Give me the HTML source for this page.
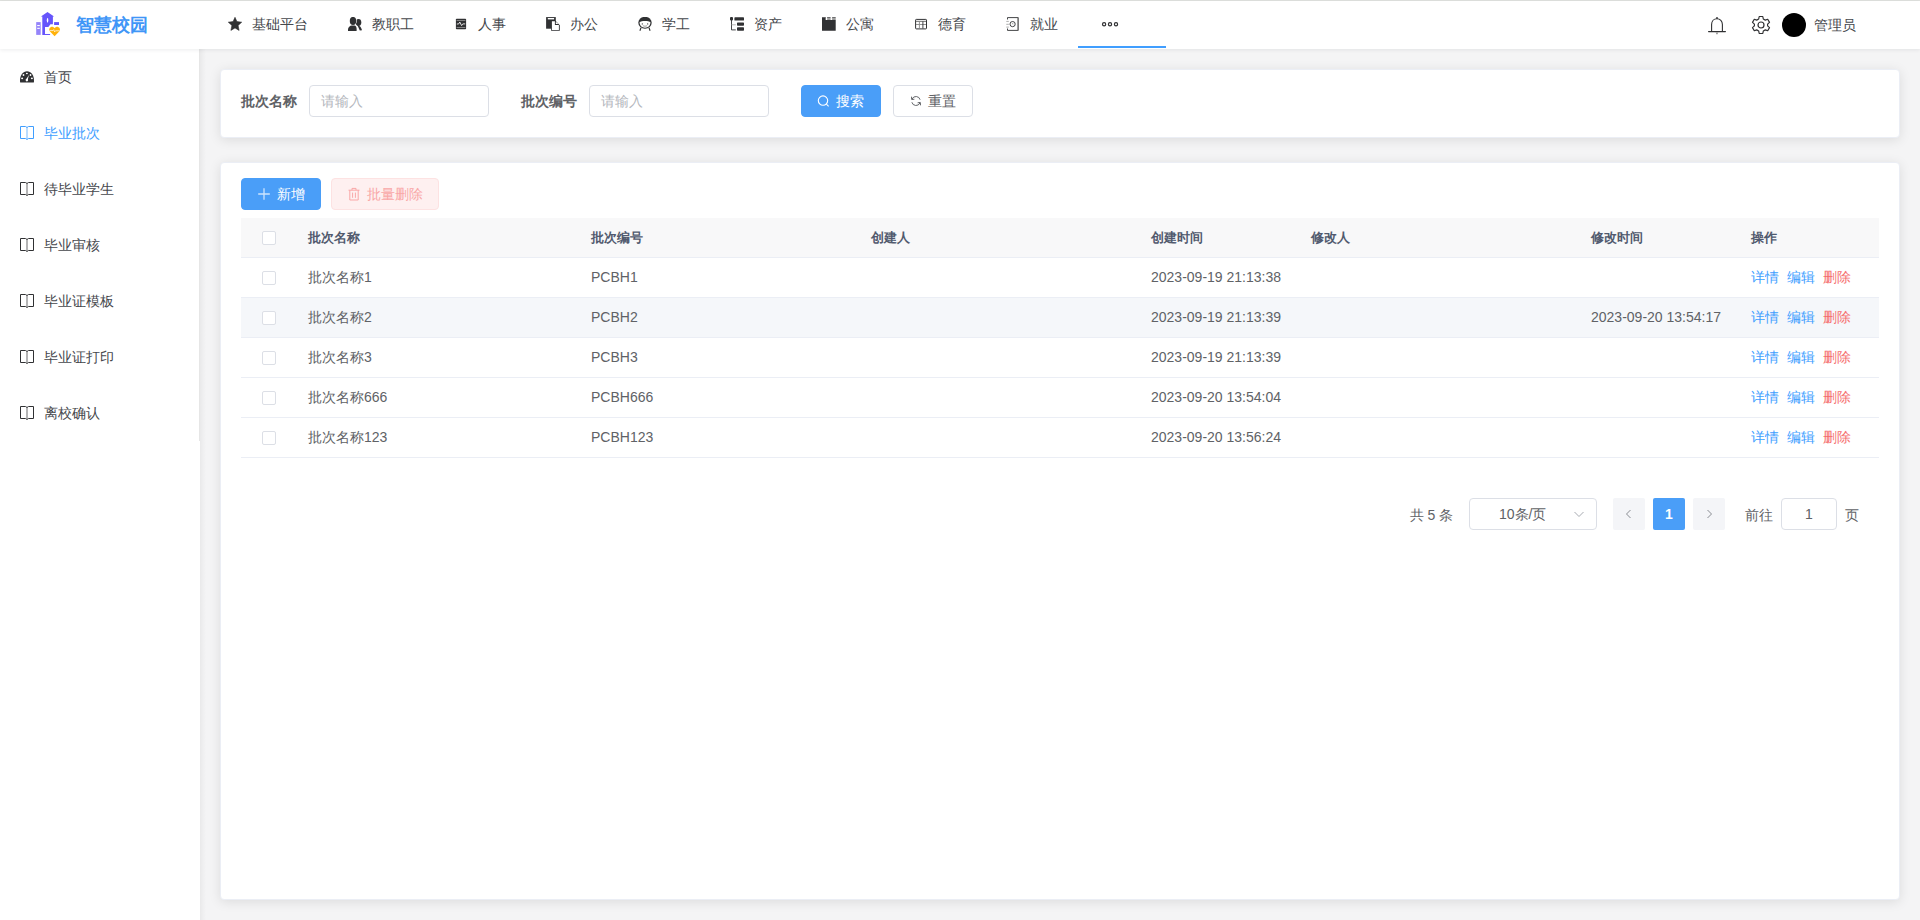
<!DOCTYPE html>
<html><head><meta charset="utf-8">
<style>
*{box-sizing:border-box;margin:0;padding:0}
html,body{width:1920px;height:920px;overflow:hidden}
body{font-family:"Liberation Sans",sans-serif;font-size:14px;color:#606266;background:#f4f4f5;position:relative}
.abs{position:absolute}
#topline{left:0;top:0;width:1920px;height:1px;background:#dfe1de}
#header{left:0;top:1px;width:1920px;height:48px;background:#fff;box-shadow:0 1px 4px rgba(0,21,41,.08);z-index:5}
#sidebar{left:0;top:49px;width:200px;height:871px;background:#fff;z-index:3}
#menuborder{left:199px;top:49px;width:1px;height:392px;background:#e6e6e6;z-index:4}
.card{background:#fff;border:1px solid #ebeef5;border-radius:4px;box-shadow:0 2px 12px 0 rgba(0,0,0,.1)}
.nav{top:0;height:49px;display:flex;align-items:center;color:#303133;font-size:14px}
.nav svg{display:block}
.txt{white-space:nowrap;line-height:1}

.inp{border:1px solid #dcdfe6;border-radius:4px;background:#fff;z-index:6;padding-left:11px;display:flex;align-items:center;font-size:14px;color:#b4b7bd;white-space:nowrap}
.btn{border-radius:4px;z-index:6;display:flex;align-items:center;justify-content:center;font-size:14px;white-space:nowrap;padding-top:2px}
.btn.primary{background:#4a9ef8;border:1px solid #4a9ef8;color:#fff;font-weight:500}
.btn svg{margin-top:-2px}
.btn.plain{background:#fff;border:1px solid #dcdfe6;color:#606266}

.th{font-size:13px;font-weight:bold;color:#515a6e;z-index:7}
.td{font-size:14px;color:#606266;z-index:7}
.cb{width:14px;height:14px;border:1px solid #dcdfe6;border-radius:2px;background:#fff;z-index:7}
.pg{width:32px;height:32px;background:#f4f5f8;border-radius:2px;z-index:6;display:flex;align-items:center;justify-content:center;font-size:14px;color:#606266}
</style></head><body>
<div id="topline" class="abs"></div>
<div id="header" class="abs"></div>
<div id="sidebar" class="abs"></div>
<div id="menuborder" class="abs"></div>
<div class="abs" style="left:200px;top:49px;width:6px;height:871px;background:linear-gradient(to right,rgba(0,0,0,.045),rgba(0,0,0,0));z-index:2"></div>
<div class="abs card" style="left:220px;top:69px;width:1680px;height:69px"></div>
<div class="abs card" style="left:220px;top:162px;width:1680px;height:738px"></div>

<!-- logo -->
<svg class="abs" style="left:34px;top:10px;z-index:6" width="30" height="28" viewBox="0 0 30 28">
  <rect x="2.2" y="12.1" width="4.5" height="12.8" fill="#9584fa"/>
  <rect x="3.2" y="15" width="2.6" height="1.1" fill="#fff"/>
  <rect x="3.2" y="17.8" width="2.6" height="1.1" fill="#fff"/>
  <path d="M13.5 2 L20.1 6.5 L18.9 6.5 L18.9 14.3 L16.5 14.3 L14.3 17 L11 17 L11 23.9 L16.1 23.9 L16.1 25 L8.3 25 L8.3 6.5 L6.9 6.5 Z" fill="#6655fb"/>
  <ellipse cx="13.55" cy="10.3" rx="0.75" ry="2.4" fill="#fff"/>
  <rect x="20.1" y="12.1" width="4.9" height="2.9" fill="#6655fb"/>
  <path d="M20.6 26.2 L16 21.5 C14.6 20 15 17.4 17.1 16.9 C18.6 16.6 19.8 17.3 20.6 18.2 C21.4 17.3 22.6 16.6 24.1 16.9 C26.2 17.4 26.6 20 25.2 21.5 Z" fill="#ffb20a"/>
  <path d="M15.6 20.6 L19 20.6 L19.7 19.6 L20.7 21.9 L21.5 20.8 L25.6 20.8" stroke="#fff" stroke-width="0.7" fill="none"/>
</svg>
<div class="abs txt" style="left:76px;top:16px;font-size:18px;font-weight:bold;color:#4096f7;z-index:6;letter-spacing:0px">智慧校园</div>
<div class="abs" style="left:228px;top:17px;z-index:6"><svg width="14" height="14" viewBox="0 0 14 14"><path d="M7 0.3 L8.9 4.6 L13.7 5.2 L10.1 8.4 L11.1 13.4 L7 10.9 L2.9 13.4 L3.9 8.4 L0.3 5.2 L5.1 4.6 Z" fill="#303133" stroke="#303133" stroke-width="0.6" stroke-linejoin="round"/></svg></div>
<div class="abs txt" style="left:252px;top:17px;font-size:14px;color:#45474c;z-index:6">基础平台</div>
<div class="abs" style="left:348px;top:17px;z-index:6"><svg width="14" height="14" viewBox="0 0 14 14"><ellipse cx="10.5" cy="5.5" rx="2.8" ry="3.4" fill="#303133"/><path d="M9.3 8 C11.8 8.6 13.5 10.6 14 13.3 L11.8 13.6 Z" fill="#303133"/><g fill="#fff" stroke="#fff" stroke-width="1.1"><ellipse cx="5" cy="4" rx="3.2" ry="4.1"/><path d="M-0.2 14 L0.1 11.8 C0.5 9.7 2.2 8.4 3.6 8.4 L6.4 8.4 C7.8 8.4 8.6 9.7 8.6 11.6 L8.6 14 Z"/></g><g fill="#303133"><ellipse cx="5" cy="4" rx="3.2" ry="4.1"/><path d="M-0.2 14 L0.1 11.8 C0.5 9.7 2.2 8.4 3.6 8.4 L6.4 8.4 C7.8 8.4 8.6 9.7 8.6 11.6 L8.6 14 Z"/></g></svg></div>
<div class="abs txt" style="left:372px;top:17px;font-size:14px;color:#45474c;z-index:6">教职工</div>
<div class="abs" style="left:454px;top:17px;z-index:6"><svg width="14" height="14" viewBox="0 0 14 14"><rect x="1.9" y="1.8" width="10.2" height="10.4" rx="0.8" fill="#303133"/><rect x="2.6" y="3.2" width="8.8" height="0.6" fill="#bbb"/><rect x="2.6" y="10.1" width="8.8" height="0.6" fill="#bbb"/><path d="M2.8 7 L4.6 7 L5.8 5 L7.6 8.6 L8.8 6.9 L11.2 6.9" stroke="#eee" stroke-width="0.9" fill="none"/></svg></div>
<div class="abs txt" style="left:478px;top:17px;font-size:14px;color:#45474c;z-index:6">人事</div>
<div class="abs" style="left:546px;top:17px;z-index:6"><svg width="14" height="14" viewBox="0 0 14 14"><rect x="0.1" y="0.1" width="9.7" height="11.6" fill="#303133"/><rect x="1.8" y="1" width="6.3" height="1.4" fill="#fff"/><path d="M5.1 3.4 L9.3 3.4 L13.8 8.3 L13.8 13.8 L5.1 13.8 Z" fill="#303133"/><path d="M5.9 4.3 L8.9 4.3 L8.9 7.9 L12.9 7.9 L12.9 12.9 L5.9 12.9 Z" fill="#fff"/><path d="M9.8 4.7 L12.5 7 L9.8 7 Z" fill="#fff"/></svg></div>
<div class="abs txt" style="left:570px;top:17px;font-size:14px;color:#45474c;z-index:6">办公</div>
<div class="abs" style="left:638px;top:17px;z-index:6"><svg width="14" height="14" viewBox="0 0 14 14"><ellipse cx="7" cy="5.8" rx="6.7" ry="6" fill="#303133"/><path d="M1.6 5.1 C3.2 3.5 10.8 3.5 12.4 5.1 C12.6 8.6 10.2 10.8 7 10.8 C3.8 10.8 1.4 8.6 1.6 5.1 Z" fill="#fff"/><circle cx="4.3" cy="6.9" r="0.6" fill="#303133"/><circle cx="9.7" cy="6.9" r="0.6" fill="#303133"/><path d="M4.9 8.6 C6 9.4 8 9.4 9.1 8.6" stroke="#888" stroke-width="0.8" fill="none"/><path d="M3 10.8 L1.9 13.8 M11 10.8 L12.1 13.8" stroke="#303133" stroke-width="1.1"/></svg></div>
<div class="abs txt" style="left:662px;top:17px;font-size:14px;color:#45474c;z-index:6">学工</div>
<div class="abs" style="left:730px;top:17px;z-index:6"><svg width="14" height="14" viewBox="0 0 14 14"><rect x="0" y="0" width="3" height="3.4" rx="1" fill="#303133"/><path d="M1.5 3 L1.5 12.9 L5.8 12.9" stroke="#303133" stroke-width="0.9" fill="none"/><path d="M1.5 7.8 L5.8 7.8" stroke="#aaa" stroke-width="0.9"/><rect x="4.4" y="0.3" width="9.6" height="3.3" rx="0.7" fill="#303133"/><rect x="7" y="5.4" width="7" height="3.3" rx="0.7" fill="#303133"/><rect x="7" y="10.3" width="7" height="3.4" rx="0.7" fill="#303133"/></svg></div>
<div class="abs txt" style="left:754px;top:17px;font-size:14px;color:#45474c;z-index:6">资产</div>
<div class="abs" style="left:822px;top:17px;z-index:6"><svg width="14" height="14" viewBox="0 0 14 14"><path d="M0 0.3 L3.8 0.3 L3.8 3 L13.7 3 L13.7 13.7 L0 13.7 Z" fill="#303133"/><rect x="5.1" y="0.3" width="3.5" height="0.8" fill="#303133"/><rect x="10.1" y="0.3" width="3.6" height="0.8" fill="#303133"/><rect x="5.1" y="1.1" width="8.6" height="1.9" fill="#999"/><rect x="3.8" y="1.1" width="1.3" height="1.9" fill="#fff"/><rect x="8.6" y="1.1" width="1.5" height="1.9" fill="#fff"/></svg></div>
<div class="abs txt" style="left:846px;top:17px;font-size:14px;color:#45474c;z-index:6">公寓</div>
<div class="abs" style="left:914px;top:17px;z-index:6"><svg width="14" height="14" viewBox="0 0 14 14"><rect x="1.6" y="2.4" width="10.9" height="9.5" rx="0.7" fill="none" stroke="#303133" stroke-width="1"/><path d="M2 4.4 L12 4.4" stroke="#888" stroke-width="1.2"/><path d="M2 7.5 L12 7.5" stroke="#888" stroke-width="0.9"/><path d="M5.4 4.4 L5.4 11.5" stroke="#888" stroke-width="0.9"/><path d="M8.9 4.4 L8.9 11.5" stroke="#303133" stroke-width="0.9"/></svg></div>
<div class="abs txt" style="left:938px;top:17px;font-size:14px;color:#45474c;z-index:6">德育</div>
<div class="abs" style="left:1006px;top:17px;z-index:6"><svg width="14" height="14" viewBox="0 0 14 14"><path d="M1.5 2.5 L1.5 0.6 L12.2 0.6 L12.2 13.4 L1.5 13.4 L1.5 11.5" stroke="#303133" stroke-width="0.9" fill="none"/><path d="M12 0.6 L12 13.4" stroke="#777" stroke-width="1"/><path d="M0.3 4.4 L2.8 4.4 M0.3 7.3 L2.8 7.3 M0.3 10.1 L2.8 10.1" stroke="#999" stroke-width="0.8"/><circle cx="6.6" cy="7.1" r="2.6" fill="none" stroke="#303133" stroke-width="0.9"/><path d="M6.6 5.9 L6.9 7.4" stroke="#888" stroke-width="0.8"/></svg></div>
<div class="abs txt" style="left:1030px;top:17px;font-size:14px;color:#45474c;z-index:6">就业</div>
<svg class="abs" style="left:1099px;top:18px;z-index:6" width="24" height="12" viewBox="0 0 24 12"><circle cx="5.1" cy="6.3" r="1.6" fill="none" stroke="#303133" stroke-width="1.2"/><circle cx="11" cy="6.3" r="1.6" fill="none" stroke="#303133" stroke-width="1.2"/><circle cx="17" cy="6.3" r="1.6" fill="none" stroke="#303133" stroke-width="1.2"/></svg>
<div class="abs" style="left:1078px;top:46px;width:88px;height:2px;background:#409eff;z-index:6"></div>
<svg class="abs" style="left:1706px;top:15px;z-index:6" width="22" height="22" viewBox="0 0 22 22"><path d="M5.6 16.5 L5.6 9.6 C5.6 6.2 7.9 3.7 11 3.7 C14.1 3.7 16.4 6.2 16.4 9.6 L16.4 16.5" stroke="#303133" stroke-width="1.1" fill="none"/><path d="M2.6 16.6 L19.4 16.6" stroke="#303133" stroke-width="1.2" stroke-linecap="round"/><circle cx="11" cy="3" r="0.9" fill="#303133"/><path d="M9.6 17.4 L12.4 17.4 L11 19.8 Z" fill="#888"/></svg>
<svg class="abs" style="left:1750px;top:14px;z-index:6" width="22" height="22" viewBox="0 0 22 22"><path d="M9.2 2.5 L12.8 2.5 L13.3 5 L15.3 6.1 L17.7 5.3 L19.5 8.4 L17.6 10.1 L17.6 11.9 L19.5 13.6 L17.7 16.7 L15.3 15.9 L13.3 17 L12.8 19.5 L9.2 19.5 L8.7 17 L6.7 15.9 L4.3 16.7 L2.5 13.6 L4.4 11.9 L4.4 10.1 L2.5 8.4 L4.3 5.3 L6.7 6.1 L8.7 5 Z" stroke="#303133" stroke-width="1.2" stroke-linejoin="round" fill="none"/><circle cx="11" cy="11" r="3" stroke="#303133" stroke-width="1.2" fill="none"/></svg>
<div class="abs" style="left:1782px;top:13px;width:24px;height:24px;border-radius:50%;background:#000;z-index:6"></div>
<div class="abs txt" style="left:1814px;top:18px;font-size:14px;color:#45474c;z-index:6">管理员</div>
<div class="abs" style="left:20px;top:70px;z-index:6"><svg width="14" height="14" viewBox="0 0 14 14"><path d="M0.2 12.6 C0 11.8 0 11.2 0 10.4 C0 5.1 3.1 1.2 7 1.2 C10.9 1.2 14 5.1 14 10.4 C14 11.2 14 11.8 13.8 12.6 Z" fill="#303133"/><ellipse cx="6.9" cy="3.5" rx="1" ry="0.8" fill="#fff"/><ellipse cx="3.5" cy="4.9" rx="0.9" ry="1" fill="#fff"/><ellipse cx="10.5" cy="4.9" rx="0.9" ry="1" fill="#fff"/><ellipse cx="2.1" cy="8.4" rx="1" ry="0.8" fill="#fff"/><ellipse cx="11.9" cy="8.4" rx="1" ry="0.8" fill="#fff"/><path d="M6.1 9.4 L8.9 4.9 L7.7 10 Z" fill="#fff"/><circle cx="6.85" cy="9.9" r="1.25" fill="#fff"/><path d="M6.85 11 L6.85 12.6" stroke="#999" stroke-width="0.6"/></svg></div>
<div class="abs txt" style="left:44px;top:70px;font-size:14px;color:#45474c;z-index:6">首页</div>
<div class="abs" style="left:20px;top:126px;z-index:6"><svg width="14" height="14" viewBox="0 0 14 14"><path d="M0.5 0.5 H5.6 L7 1.5 L8.4 0.5 H13.5 V12.5 H8.4 L7 13.5 L5.6 12.5 H0.5 Z" fill="none" stroke="#409eff" stroke-width="1"/><rect x="6.2" y="1.4" width="1.6" height="11.3" fill="#409eff" opacity="0.45"/></svg></div>
<div class="abs txt" style="left:44px;top:126px;font-size:14px;color:#409eff;z-index:6">毕业批次</div>
<div class="abs" style="left:20px;top:182px;z-index:6"><svg width="14" height="14" viewBox="0 0 14 14"><path d="M0.5 0.5 H5.6 L7 1.5 L8.4 0.5 H13.5 V12.5 H8.4 L7 13.5 L5.6 12.5 H0.5 Z" fill="none" stroke="#303133" stroke-width="1"/><rect x="6.2" y="1.4" width="1.6" height="11.3" fill="#303133" opacity="0.45"/></svg></div>
<div class="abs txt" style="left:44px;top:182px;font-size:14px;color:#45474c;z-index:6">待毕业学生</div>
<div class="abs" style="left:20px;top:238px;z-index:6"><svg width="14" height="14" viewBox="0 0 14 14"><path d="M0.5 0.5 H5.6 L7 1.5 L8.4 0.5 H13.5 V12.5 H8.4 L7 13.5 L5.6 12.5 H0.5 Z" fill="none" stroke="#303133" stroke-width="1"/><rect x="6.2" y="1.4" width="1.6" height="11.3" fill="#303133" opacity="0.45"/></svg></div>
<div class="abs txt" style="left:44px;top:238px;font-size:14px;color:#45474c;z-index:6">毕业审核</div>
<div class="abs" style="left:20px;top:294px;z-index:6"><svg width="14" height="14" viewBox="0 0 14 14"><path d="M0.5 0.5 H5.6 L7 1.5 L8.4 0.5 H13.5 V12.5 H8.4 L7 13.5 L5.6 12.5 H0.5 Z" fill="none" stroke="#303133" stroke-width="1"/><rect x="6.2" y="1.4" width="1.6" height="11.3" fill="#303133" opacity="0.45"/></svg></div>
<div class="abs txt" style="left:44px;top:294px;font-size:14px;color:#45474c;z-index:6">毕业证模板</div>
<div class="abs" style="left:20px;top:350px;z-index:6"><svg width="14" height="14" viewBox="0 0 14 14"><path d="M0.5 0.5 H5.6 L7 1.5 L8.4 0.5 H13.5 V12.5 H8.4 L7 13.5 L5.6 12.5 H0.5 Z" fill="none" stroke="#303133" stroke-width="1"/><rect x="6.2" y="1.4" width="1.6" height="11.3" fill="#303133" opacity="0.45"/></svg></div>
<div class="abs txt" style="left:44px;top:350px;font-size:14px;color:#45474c;z-index:6">毕业证打印</div>
<div class="abs" style="left:20px;top:406px;z-index:6"><svg width="14" height="14" viewBox="0 0 14 14"><path d="M0.5 0.5 H5.6 L7 1.5 L8.4 0.5 H13.5 V12.5 H8.4 L7 13.5 L5.6 12.5 H0.5 Z" fill="none" stroke="#303133" stroke-width="1"/><rect x="6.2" y="1.4" width="1.6" height="11.3" fill="#303133" opacity="0.45"/></svg></div>
<div class="abs txt" style="left:44px;top:406px;font-size:14px;color:#45474c;z-index:6">离校确认</div>

<div class="abs txt" style="left:241px;top:94px;font-size:14px;font-weight:bold;color:#606266;z-index:6">批次名称</div>
<div class="abs inp" style="left:309px;top:85px;width:180px;height:32px;padding-top:2px"><span>请输入</span></div>
<div class="abs txt" style="left:521px;top:94px;font-size:14px;font-weight:bold;color:#606266;z-index:6">批次编号</div>
<div class="abs inp" style="left:589px;top:85px;width:180px;height:32px;padding-top:2px"><span>请输入</span></div>
<div class="abs btn primary" style="left:801px;top:85px;width:80px;height:32px">
 <svg width="14" height="14" viewBox="0 0 14 14" style="margin-right:5px;margin-left:-1px"><circle cx="6" cy="6.6" r="4.7" fill="none" stroke="#fff" stroke-width="1.1"/><path d="M9.4 10.1 L11.6 12.3" stroke="#fff" stroke-width="1.1"/></svg><span>搜索</span></div>
<div class="abs btn plain" style="left:893px;top:85px;width:80px;height:32px">
 <svg width="14" height="14" viewBox="0 0 14 14" style="margin-right:5px;margin-left:-1px"><g transform="translate(7 7) scale(0.9) translate(-7 -7)"><path d="M11.6 5.6 A4.8 4.8 0 0 0 2.6 4.8" fill="none" stroke="#606266" stroke-width="1.1"/><path d="M2.4 8.4 A4.8 4.8 0 0 0 11.4 9.2" fill="none" stroke="#606266" stroke-width="1.1"/><path d="M2 2.2 L2.2 5.4 L5.2 5" fill="none" stroke="#606266" stroke-width="1.1"/><path d="M12 11.8 L11.8 8.6 L8.8 9" fill="none" stroke="#606266" stroke-width="1.1"/></g></svg><span>重置</span></div>
<div class="abs btn primary" style="left:241px;top:178px;width:80px;height:32px">
 <svg width="14" height="14" viewBox="0 0 14 14" style="margin-right:6px"><path d="M7 1.2 L7 12.8 M1.2 7 L12.8 7" stroke="#fff" stroke-opacity="0.72" stroke-width="1.3"/></svg><span>新增</span></div>
<div class="abs btn" style="left:331px;top:178px;width:108px;height:32px;background:#fef0f0;border:1px solid #fde2e2;color:#f9a7a7">
 <svg width="14" height="14" viewBox="0 0 14 14" style="margin-right:6px"><path d="M1.5 3.2 L12.5 3.2 M5 3.2 L5 1.4 L9 1.4 L9 3.2 M2.8 3.2 L2.8 13 L11.2 13 L11.2 3.2 M5.6 5.6 L5.6 10.8 M8.4 5.6 L8.4 10.8" fill="none" stroke="#f9a7a7" stroke-width="1"/></svg><span>批量删除</span></div>

<div class="abs" style="left:241px;top:218px;width:1638px;height:40px;background:#f8f8f9;border-bottom:1px solid #ebeef5;z-index:6"></div>
<div class="abs" style="left:241px;top:258px;width:1638px;height:40px;background:#fff;border-bottom:1px solid #ebeef5;z-index:6"></div>
<div class="abs" style="left:241px;top:298px;width:1638px;height:40px;background:#f5f7fa;border-bottom:1px solid #ebeef5;z-index:6"></div>
<div class="abs" style="left:241px;top:338px;width:1638px;height:40px;background:#fff;border-bottom:1px solid #ebeef5;z-index:6"></div>
<div class="abs" style="left:241px;top:378px;width:1638px;height:40px;background:#fff;border-bottom:1px solid #ebeef5;z-index:6"></div>
<div class="abs" style="left:241px;top:418px;width:1638px;height:40px;background:#fff;border-bottom:1px solid #ebeef5;z-index:6"></div>
<div class="abs txt th" style="left:308px;top:231px">批次名称</div>
<div class="abs txt th" style="left:591px;top:231px">批次编号</div>
<div class="abs txt th" style="left:871px;top:231px">创建人</div>
<div class="abs txt th" style="left:1151px;top:231px">创建时间</div>
<div class="abs txt th" style="left:1311px;top:231px">修改人</div>
<div class="abs txt th" style="left:1591px;top:231px">修改时间</div>
<div class="abs txt th" style="left:1751px;top:231px">操作</div>
<div class="abs cb" style="left:262px;top:231px"></div>
<div class="abs cb" style="left:262px;top:271px"></div>
<div class="abs txt td" style="left:308px;top:270px">批次名称1</div>
<div class="abs txt td" style="left:591px;top:270px">PCBH1</div>
<div class="abs txt td" style="left:1151px;top:270px">2023-09-19 21:13:38</div>
<div class="abs txt td" style="left:1751px;top:270px;color:#409eff">详情</div>
<div class="abs txt td" style="left:1787px;top:270px;color:#409eff">编辑</div>
<div class="abs txt td" style="left:1823px;top:270px;color:#f56c6c">删除</div>
<div class="abs cb" style="left:262px;top:311px"></div>
<div class="abs txt td" style="left:308px;top:310px">批次名称2</div>
<div class="abs txt td" style="left:591px;top:310px">PCBH2</div>
<div class="abs txt td" style="left:1151px;top:310px">2023-09-19 21:13:39</div>
<div class="abs txt td" style="left:1591px;top:310px">2023-09-20 13:54:17</div>
<div class="abs txt td" style="left:1751px;top:310px;color:#409eff">详情</div>
<div class="abs txt td" style="left:1787px;top:310px;color:#409eff">编辑</div>
<div class="abs txt td" style="left:1823px;top:310px;color:#f56c6c">删除</div>
<div class="abs cb" style="left:262px;top:351px"></div>
<div class="abs txt td" style="left:308px;top:350px">批次名称3</div>
<div class="abs txt td" style="left:591px;top:350px">PCBH3</div>
<div class="abs txt td" style="left:1151px;top:350px">2023-09-19 21:13:39</div>
<div class="abs txt td" style="left:1751px;top:350px;color:#409eff">详情</div>
<div class="abs txt td" style="left:1787px;top:350px;color:#409eff">编辑</div>
<div class="abs txt td" style="left:1823px;top:350px;color:#f56c6c">删除</div>
<div class="abs cb" style="left:262px;top:391px"></div>
<div class="abs txt td" style="left:308px;top:390px">批次名称666</div>
<div class="abs txt td" style="left:591px;top:390px">PCBH666</div>
<div class="abs txt td" style="left:1151px;top:390px">2023-09-20 13:54:04</div>
<div class="abs txt td" style="left:1751px;top:390px;color:#409eff">详情</div>
<div class="abs txt td" style="left:1787px;top:390px;color:#409eff">编辑</div>
<div class="abs txt td" style="left:1823px;top:390px;color:#f56c6c">删除</div>
<div class="abs cb" style="left:262px;top:431px"></div>
<div class="abs txt td" style="left:308px;top:430px">批次名称123</div>
<div class="abs txt td" style="left:591px;top:430px">PCBH123</div>
<div class="abs txt td" style="left:1151px;top:430px">2023-09-20 13:56:24</div>
<div class="abs txt td" style="left:1751px;top:430px;color:#409eff">详情</div>
<div class="abs txt td" style="left:1787px;top:430px;color:#409eff">编辑</div>
<div class="abs txt td" style="left:1823px;top:430px;color:#f56c6c">删除</div>
<div class="abs txt td" style="left:1409.5px;top:508px">共 5 条</div>
<div class="abs inp" style="left:1469px;top:498px;width:128px;height:32px;color:#606266;padding-left:29px;padding-top:2px">10条/页
 <svg width="12" height="12" viewBox="0 0 12 12" style="position:absolute;left:103px;top:8.5px"><path d="M1.5 4 L6 8.5 L10.5 4" fill="none" stroke="#a8abb2" stroke-width="1"/></svg></div>
<div class="abs pg" style="left:1613px;top:498px"><svg width="12" height="12" viewBox="0 0 12 12"><path d="M7.5 2 L3.5 6 L7.5 10" fill="none" stroke="#8a8d93" stroke-width="1"/></svg></div>
<div class="abs pg" style="left:1653px;top:498px;background:#4a9ef8;color:#fff;font-weight:bold">1</div>
<div class="abs pg" style="left:1693px;top:498px"><svg width="12" height="12" viewBox="0 0 12 12"><path d="M4.5 2 L8.5 6 L4.5 10" fill="none" stroke="#8a8d93" stroke-width="1"/></svg></div>
<div class="abs txt td" style="left:1745px;top:508px">前往</div>
<div class="abs inp" style="left:1781px;top:498px;width:56px;height:32px;color:#606266;justify-content:center;padding-left:0">1</div>
<div class="abs txt td" style="left:1845px;top:508px">页</div>

</body></html>
